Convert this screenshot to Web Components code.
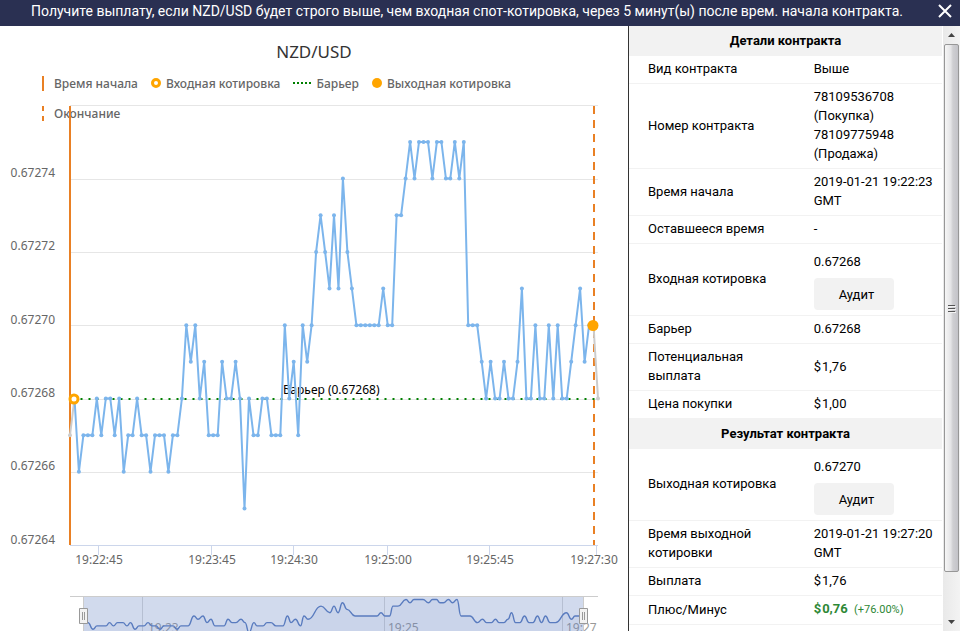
<!DOCTYPE html>
<html lang="ru">
<head>
<meta charset="utf-8">
<title>NZD/USD</title>
<style>
html, body{
    margin      : 0;
    height      : 100%;
    overflow    : hidden;
    background  : #fff;
}

body{
    font        : 13px/19px Roboto, "Liberation Sans", sans-serif;
    color       : #000;
}
</style>
</head>
<body>

<contract-popup>
    <span slot="title">Получите выплату, если NZD/USD будет строго выше, чем входная спот-котировка, через 5 минут(ы) после врем. начала контракта.</span>
    <tick-chart slot="chart">NZD/USD</tick-chart>
    <contract-details slot="details"></contract-details>
</contract-popup>

<script>
// #region HELPERS
function makeTemplate( html ){
    const t     = document.createElement( 'template' );
    t.innerHTML = html;
    return t;
}

function attach( elm, tpl ){
    elm.attachShadow( { mode: 'open' } );
    elm.shadowRoot.appendChild( tpl.content.cloneNode( true ) );
    return elm.shadowRoot;
}
// #endregion

// #region CONTRACT POPUP
class ContractPopup extends HTMLElement{
    constructor(){
        super();
        const sroot = attach( this, ContractPopup.Template );
        sroot.querySelector( 'button' ).addEventListener( 'click', ()=>this.remove() );
    }
}

ContractPopup.Template = makeTemplate( `
<style>
:host{
    display         : flex;
    flex-direction  : column;
    height          : 100vh;
}

header{
    display         : flex;
    align-items     : center;
    flex            : none;
    height          : 22px;
    padding         : 0px 4px 4px 0px;
    background      : #2a3052;
    color           : #fff;
    font-size       : 14px;
    line-height     : 22px;
}

.title{
    flex            : 1;
    text-align      : center;
    white-space     : nowrap;
}

button{
    display         : flex;
    padding         : 4px;
    border          : 0;
    background      : none;
    color           : inherit;
    cursor          : pointer;
}

main{
    display         : flex;
    flex            : 1;
    min-height      : 0;
}

.chart{
    flex            : 1;
    min-width       : 0;
    overflow        : hidden;
}

.details{
    display         : flex;
    flex            : none;
    width           : 331px;
    overflow        : hidden;
    border-left     : 1px solid #333;
}
.details ::slotted( * ){ flex: 1; }
</style>

<header>
    <div class="title"><slot name="title"></slot></div>
    <button type="button" aria-label="Закрыть">
        <svg width="14" height="14" viewBox="0 0 14 14"><path d="M1 1L13 13M13 1L1 13" stroke="currentColor" stroke-width="2"/></svg>
    </button>
</header>
<main>
    <section class="chart"><slot name="chart"></slot></section>
    <section class="details"><slot name="details"></slot><scroll-rail></scroll-rail></section>
</main>
` );
customElements.define( 'contract-popup', ContractPopup );
// #endregion

// #region SCROLL RAIL
class ScrollRail extends HTMLElement{
    constructor(){
        super();
        attach( this, ScrollRail.Template );
    }
}

ScrollRail.Template = makeTemplate( `
<style>
:host{
    display         : flex;
    flex-direction  : column;
    width           : 17px;
    box-sizing      : border-box;
    padding         : 0px 1px;
    background      : linear-gradient( 90deg, #e9e9e9, #f3f3f3 );
}

.arrow{
    display         : flex;
    align-items     : center;
    justify-content : center;
    flex            : none;
    height          : 18px;
}

.thumb{
    display         : flex;
    align-items     : center;
    justify-content : center;
    flex            : 528;
    border          : 1px solid #979797;
    border-radius   : 2px;
    background      : linear-gradient( 90deg, #f6f6f6 0%, #e4e4e6 45%, #cfcfd2 60%, #c3c3c8 100% );
}

.space{ flex : 41; }
</style>
<div class="arrow"><svg width="7" height="4" viewBox="0 0 7 4"><path d="M0 4L3.5 0L7 4Z" fill="#444"/></svg></div>
<div class="thumb"><svg width="8" height="9" viewBox="0 0 8 9"><path d="M0 1.5h7M0 4.5h7M0 7.5h7" stroke="#555"/><path d="M1 2.5h7M1 5.5h7M1 8.5h7" stroke="#f4f4f4"/></svg></div>
<div class="space"></div>
<div class="arrow"><svg width="7" height="4" viewBox="0 0 7 4"><path d="M0 0L3.5 4L7 0Z" fill="#444"/></svg></div>
` );
customElements.define( 'scroll-rail', ScrollRail );
// #endregion

// #region LEGEND ITEM
class LegendItem extends HTMLElement{
    constructor(){
        super();
        this._root = attach( this, LegendItem.Template );
    }

    connectedCallback(){
        this._root.querySelector( '.ico' ).innerHTML = LegendItem.Icons[ this.getAttribute( 'icon' ) ];
    }
}

LegendItem.Icons = {
    line    : '<svg width="7" height="15"><path d="M1 0V15" stroke="#e98024" stroke-width="2"/></svg>',
    dash    : '<svg width="7" height="15"><path d="M1 0V15" stroke="#e98024" stroke-width="2" stroke-dasharray="5 5"/></svg>',
    ring    : '<svg width="10" height="10"><circle cx="5" cy="5" r="3.5" fill="#fff" stroke="orange" stroke-width="3"/></svg>',
    dots    : '<svg width="18" height="2"><path d="M0 1H18" stroke="green" stroke-width="2" stroke-dasharray="2 2"/></svg>',
    disc    : '<svg width="10" height="10"><circle cx="5" cy="5" r="5" fill="orange"/></svg>',
};

LegendItem.Template = makeTemplate( `
<style>
:host{
    display         : flex;
    align-items     : center;
    gap             : 5px;
    height          : 30px;
    white-space     : nowrap;
}
.ico{ display: flex; }
</style>
<span class="ico"></span><slot></slot>
` );
customElements.define( 'legend-item', LegendItem );
// #endregion

// #region TICK CHART
class TickChart extends HTMLElement{
    // Last digits of each quote, one per tick : 68 is 0.67268
    static ticks = [
        67,68,66,67,67,67,68,67,68,68,67,68,66,67,67,68,67,67,66,67,
        67,67,66,67,67,68,70,69,70,68,69,67,67,67,69,68,68,69,68,65,
        68,67,67,68,68,67,67,67,70,68,69,67,70,69,70,72,73,72,71,73,
        71,74,72,71,70,70,70,70,70,70,71,70,70,73,73,74,75,74,75,75,
        75,74,75,75,74,74,75,74,75,70,70,70,69,68,69,68,68,69,68,68,
        69,71,68,68,70,68,68,70,68,70,68,68,69,70,71,69,70,70,68,
    ];

    // Overview line, pairs of x and quote
    static overview = [
        84,68, 88,68, 93,66, 97,67, 106,67, 109.5,68, 113.5,67, 117.5,68, 123,68, 127,67,
        130.5,68, 135,66, 139,67, 144,67, 148,68, 152,67, 156,67, 160,66, 164,67, 173,67,
        177,66, 181,67, 188,67, 194,70, 198,69, 203,70, 207,68, 211,69, 215,67, 224,67,
        228,69, 232,68, 236,68, 241,69, 245,68, 249,65, 254,68, 257,67, 263,67, 267,68,
        271,68, 276,67, 283,67, 287.5,70, 291,68, 295.5,69, 300.5,67, 304,70, 308,69, 321,73,
        330,71, 334,73, 338,71, 342.5,74, 347,72, 355,70, 377,70, 381,71, 385,70, 389.5,70,
        393,73, 398,73, 406,75, 410,74, 414,75, 423,75, 428.5,74, 432.5,75, 436.5,75, 440,74,
        443.5,74, 448.5,75, 452.5,74, 457,75, 461,70, 470,70, 477.5,68, 482.5,69, 486.5,68,
        491.5,68, 495.5,69, 499,68, 504,68, 508,69, 511.5,71, 515.5,68, 520,68, 524.5,70,
        529,68, 533,68, 537.5,70, 541.5,68, 545.5,70, 550,68, 555.5,68, 566.5,71, 571.5,69,
        575,70, 583,70,
    ];

    constructor(){
        super();
        this._svg = attach( this, TickChart.Template ).querySelector( '.plot' );
        this.drawAxes();
        this.drawSeries();
        this.drawOverview();
    }

    xAt( i ){ return 70 + i * 528 / 118; }
    yAt( v ){ return 399 - ( v - 68 ) * 36.66; }

    fill( sel, html ){ this._svg.querySelector( sel ).innerHTML = html; }

    drawAxes(){
        let out = '';
        for( let v=66; v <= 76; v+=2 ){
            const y = Math.floor( this.yAt( v ) ) + 0.5;
            out += `<path d="M70 ${y}H598" stroke="#e6e6e6"/>`;
        }
        out += '<path d="M70 545.5H598" stroke="#ccd6eb"/>';
        for( let v=64; v <= 74; v+=2 ){
            out += `<text x="55" y="${ Math.round( this.yAt( v ) ) - 2 }" text-anchor="end">0.672${v}</text>`;
        }

        const times = [ [98,'19:22:45'], [211,'19:23:45'], [293,'19:24:30'], [387,'19:25:00'], [489,'19:25:45'], [596,'19:27:30'] ];
        for( const [x,txt] of times ){
            out += `<path d="M${x}.5 545V555" stroke="#ccd6eb"/>`;
            out += `<text x="${ Math.min( x + 1, 594 ) }" y="564" text-anchor="middle">${txt}</text>`;
        }
        this.fill( '.axes', out );
    }

    drawSeries(){
        const pts   = TickChart.ticks.map( ( v, i )=>[ this.xAt( i ).toFixed( 1 ), ( this.yAt( v ) - 0.5 ).toFixed( 1 ) ] );
        const last  = pts.length - 1;
        const line  = ( ary, col )=>`<polyline points="${ ary.join( ' ' ) }" fill="none" stroke="${col}" stroke-width="2" stroke-linejoin="round"/>`;

        // Ticks outside of the contract are grey
        let out = line( pts.slice( 0, 2 ), '#ccc' ) + line( pts.slice( last - 1 ), '#ccc' );
        out += line( pts.slice( 1, last ), '#7cb5ec' );
        pts.forEach( ( p, i )=>{
            const col = ( i == 0 || i == last )? '#ccc' : '#7cb5ec';
            out += `<circle cx="${p[0]}" cy="${p[1]}" r="2" fill="${col}"/>`;
        });
        this.fill( '.series', out );
    }

    drawOverview(){
        const ary   = TickChart.overview;
        const y     = v=>616 - ( v - 70 ) * 3.3;
        let d       = `M${ary[0]} ${y( ary[1] )}`;
        for( let i=2; i < ary.length; i+=2 ){
            const mid = ( ary[i-2] + ary[i] ) / 2;
            d += `C${mid} ${y( ary[i-1] )} ${mid} ${y( ary[i+1] )} ${ary[i]} ${y( ary[i+1] )}`;
        }
        this.fill( '.overview', `
            <path d="${d}V640H84Z" fill="#335cad" fill-opacity="0.05"/>
            <path d="${d}" fill="none" stroke="#5478bd" stroke-width="1.4"/>
        ` );
    }
}

TickChart.Template = makeTemplate( `
<style>
:host{
    display         : block;
    font            : 12px/15px "Noto Sans", "Open Sans", sans-serif;
    color           : #666;
}

h1{
    margin          : 0;
    padding         : 16px 0px 6px;
    font-size       : 17px;
    font-weight     : 400;
    line-height     : 20px;
    text-align      : center;
    color           : #333;
}

.legend{
    display         : flex;
    flex-wrap       : wrap;
    column-gap      : 13px;
    padding         : 0px 70px 0px 42px;
    font-weight     : 500;
}

.plot{
    display         : block;
    width           : 100%;
    margin-top      : -23px;
    fill            : #666;
}
</style>

<h1><slot></slot></h1>
<div class="legend">
    <legend-item icon="line">Время начала</legend-item>
    <legend-item icon="ring">Входная котировка</legend-item>
    <legend-item icon="dots">Барьер</legend-item>
    <legend-item icon="disc">Выходная котировка</legend-item>
    <legend-item icon="dash">Окончание</legend-item>
</div>

<svg class="plot" viewBox="0 105 628 534">
    <g class="axes"></g>
    <path d="M72.5 399H598" stroke="green" stroke-width="2" stroke-dasharray="2 6"/>
    <path d="M70 106V545" stroke="#e98024" stroke-width="2"/>
    <path d="M594 106V545" stroke="#e98024" stroke-width="2" stroke-dasharray="8 6"/>
    <text x="283" y="394" fill="#000">Барьер (0.67268)</text>
    <g class="series"></g>
    <circle cx="74" cy="399" r="4" fill="#fff" stroke="orange" stroke-width="3"/>
    <circle cx="593" cy="325.5" r="5.5" fill="orange"/>

    <path d="M142.5 597V639M384.5 597V639M562.5 597V639" stroke="#d8d8d8"/>
    <g fill="#999">
        <text x="148" y="632">19:23</text>
        <text x="388" y="632">19:25</text>
        <text x="566" y="632">19:27</text>
    </g>
    <g class="overview"></g>
    <rect x="83" y="597" width="500" height="42" fill="#6685c2" fill-opacity="0.3"/>
    <path d="M70 596.5H598M83.5 596V639M583.5 596V639" stroke="#ccc" fill="none"/>
    <g fill="#f2f2f2" stroke="#999">
        <path d="M79.5 608.5h8v15h-8ZM82.5 612v8M84.5 612v8"/>
        <path d="M579.5 608.5h8v15h-8ZM582.5 612v8M584.5 612v8"/>
    </g>
</svg>
` );
customElements.define( 'tick-chart', TickChart );
// #endregion

// #region CONTRACT DETAILS
class ContractDetails extends HTMLElement{
    constructor(){
        super();
        attach( this, ContractDetails.Template );
    }
}

ContractDetails.Template = makeTemplate( `
<style>
:host{
    display         : block;
    padding-right   : 1px;
}

table{
    width           : 100%;
    border-spacing  : 0;
    table-layout    : fixed;
}

.name{ width: 59%; }

thead th{
    height          : 28px;
    padding         : 0px 0px 2px;
    background      : #f2f2f2;
    text-align      : center;
    font-weight     : 700;
}

tbody th, td{
    padding         : 3px 0px 5px;
    border-bottom   : 1px solid #f2f2f2;
    text-align      : left;
    vertical-align  : middle;
    font-weight     : 400;
}
tbody th{ padding: 3px 30px 5px 19px; }

.spot{ padding-top: 5px; }

button{
    display         : block;
    height          : 32px;
    margin-top      : 7px;
    padding         : 0px 20px 0px 25px;
    border          : 0;
    border-radius   : 4px;
    background      : #f2f2f2;
    color           : #000;
    font            : inherit;
    cursor          : pointer;
}

.cur{ margin-right: 1px; }
.profit{ color: #2e8836; }
.profit small{ margin-left: 3px; font-size: 11px; }
</style>

<table>
    <colgroup><col class="name"><col></colgroup>
    <thead><tr><th colspan="2">Детали контракта</th></tr></thead>
    <tbody>
        <tr><th>Вид контракта</th><td>Выше</td></tr>
        <tr><th>Номер контракта</th><td>78109536708<br>(Покупка)<br>78109775948<br>(Продажа)</td></tr>
        <tr><th>Время начала</th><td>2019-01-21 19:22:23 GMT</td></tr>
        <tr><th>Оставшееся время</th><td>-</td></tr>
        <tr><th>Входная котировка</th><td><div class="spot">0.67268</div><button type="button">Аудит</button></td></tr>
        <tr><th>Барьер</th><td>0.67268</td></tr>
        <tr><th>Потенциальная выплата</th><td><span class="cur">$</span>1,76</td></tr>
        <tr><th>Цена покупки</th><td><span class="cur">$</span>1,00</td></tr>
    </tbody>
</table>
<table>
    <colgroup><col class="name"><col></colgroup>
    <thead><tr><th colspan="2">Результат контракта</th></tr></thead>
    <tbody>
        <tr><th>Выходная котировка</th><td><div class="spot">0.67270</div><button type="button">Аудит</button></td></tr>
        <tr><th>Время выходной котировки</th><td>2019-01-21 19:27:20 GMT</td></tr>
        <tr><th>Выплата</th><td><span class="cur">$</span>1,76</td></tr>
        <tr><th>Плюс/Минус</th><td class="profit"><b><span class="cur">$</span>0,76</b> <small>(+76.00%)</small></td></tr>
    </tbody>
</table>
` );
customElements.define( 'contract-details', ContractDetails );
// #endregion
</script>
</body>
</html>
